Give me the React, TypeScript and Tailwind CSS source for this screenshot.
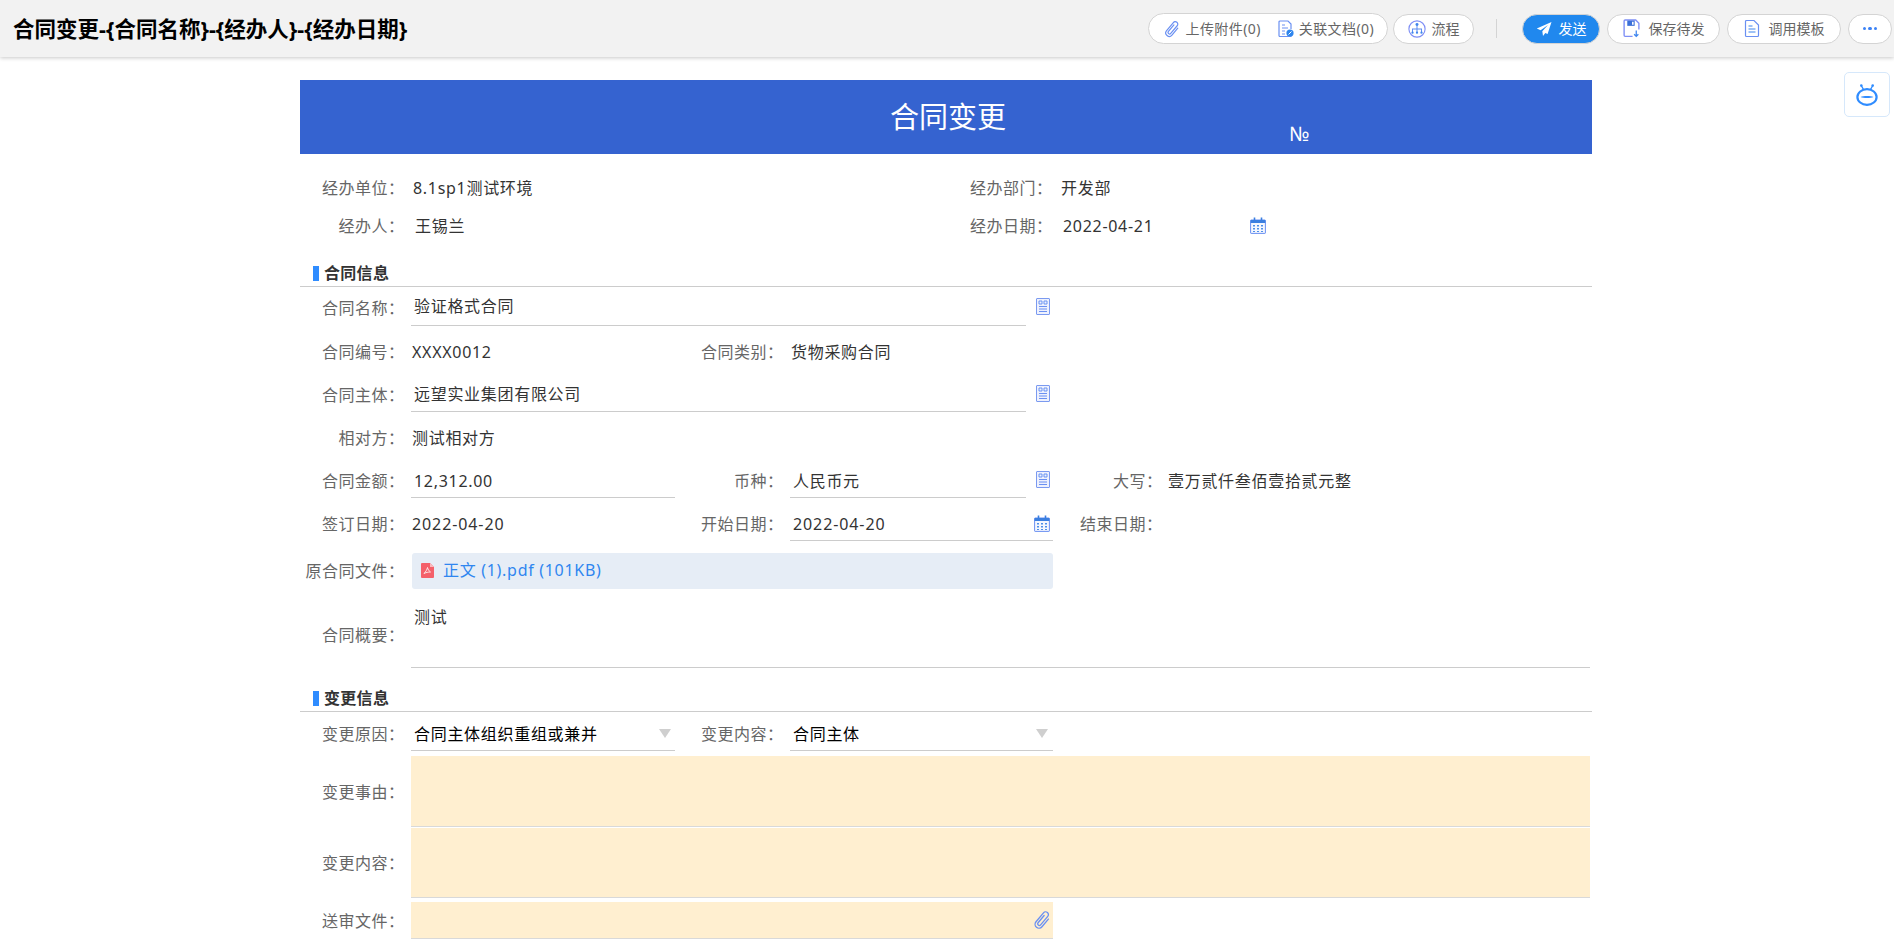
import React from "react";

const Clip = ({ className = "" }: { className?: string }) => (
  <svg viewBox="0 0 18 18" className={className} fill="none" stroke="#6a90f2" strokeWidth="1.200" strokeLinecap="round">
    <path d="M8 5v8.500a1.500 1.500 0 0 0 3 0V3.500a2.500 2.500 0 0 0-5 0V14a3.500 3.500 0 0 0 7 0V5" transform="rotate(40 9.500 9)" />
  </svg>
);

const LinkDoc = () => (
  <svg viewBox="0 0 16 18" className="w-[16px] h-[18px] shrink-0" fill="none">
    <path d="M2 1h8l3 3v5M13 14v2.500H2a1 1 0 0 1-1-1V2a1 1 0 0 1 1-1" stroke="#6a90f2" strokeWidth="1.200" />
    <path d="M4 5h3M4 8h6M4 11h3M4 14h3" stroke="#6a90f2" strokeWidth="1.100" />
    <circle cx="12" cy="13" r="3.600" fill="#2f86ee" />
    <path d="m10.500 14.500 3-3" stroke="#fff" strokeWidth="1" />
  </svg>
);

const Flow = () => (
  <svg viewBox="0 0 16 16" className="w-[18px] h-[18px] shrink-0" fill="none">
    <circle cx="8" cy="8" r="7.200" stroke="#7f8ff5" strokeWidth="1" />
    <path d="M8 4v4.500M4 11V8h8v3M8 8v3" stroke="#5f8df2" strokeWidth=".9" />
    <circle cx="8" cy="4" r="1.300" fill="#3f86ee" />
    <circle cx="4" cy="11.300" r="1" fill="#3f86ee" />
    <circle cx="8" cy="11.300" r="1" fill="#3f86ee" />
    <circle cx="12" cy="11.300" r="1" fill="#3f86ee" />
  </svg>
);

const Send = () => (
  <svg viewBox="0 0 16 16" className="w-[16px] h-[16px] shrink-0">
    <path d="M15.500 1 .8 7.600l3.800 1.700L12 4 6.300 10.300l.7 4.700 2.300-3.100 2.300 1z" fill="#fff" />
  </svg>
);

const Save = () => (
  <svg viewBox="0 0 16 18" className="w-[17px] h-[19px] shrink-0" fill="none">
    <path d="M9 16.500H2a1 1 0 0 1-1-1V2a1 1 0 0 1 1-1h10l3 3v6" stroke="#7f8ff5" strokeWidth="1.300" />
    <path d="M4 1.500h7v5H4z" fill="#3a6fd8" />
    <path d="M8.500 2.500h1.500v3H8.500z" fill="#fff" />
    <path d="M12.500 11v5.500M10.500 14.500l2 2 2-2" stroke="#3f86ee" strokeWidth="1.200" />
  </svg>
);

const Tpl = () => (
  <svg viewBox="0 0 16 18" className="w-[16px] h-[19px] shrink-0" fill="none">
    <path d="M10 1H2.500a1 1 0 0 0-1 1v14a1 1 0 0 0 1 1h11a1 1 0 0 0 1-1V5.500z" stroke="#6a90f2" strokeWidth="1.200" />
    <path d="M4.500 6.500h4M4.500 9.500h7M4.500 12.500h7" stroke="#3f86ee" strokeWidth="1.100" />
  </svg>
);

const Robot = () => (
  <svg viewBox="0 0 24 22" className="w-[24px] h-[22px]" fill="none">
    <ellipse cx="12" cy="13" rx="9.600" ry="7.800" stroke="#2f8cff" strokeWidth="2.200" />
    <path d="M5.500 13c3-1.300 10-1.300 13 0-3 1.300-10 1.300-13 0z" fill="#2f8cff" />
    <path d="m8.500 5.500-2-3.500M15.500 5.500l2-3.500" stroke="#2f8cff" strokeWidth="1.400" />
    <circle cx="6.300" cy="1.600" r="1.300" fill="#2f8cff" />
    <circle cx="17.700" cy="1.600" r="1.300" fill="#2f8cff" />
  </svg>
);

const Lookup = () => (
  <svg viewBox="0 0 14 17" className="w-[14px] h-[17px] shrink-0" fill="none">
    <rect x=".5" y=".5" width="13" height="16" rx=".5" fill="#eef1fd" stroke="#7b9af0" />
    <path d="M3 3h3v3H3zM8 3h3v3H8z" stroke="#5f8df2" strokeWidth=".9" />
    <path d="M3 8.500h8M3 11h8M3 13.500h8" stroke="#6a90f2" strokeWidth="1" />
  </svg>
);

const Calendar = () => (
  <svg viewBox="0 0 16 17" className="w-[16px] h-[17px] shrink-0" fill="none">
    <rect x=".6" y="3" width="14.800" height="13.400" rx=".5" fill="#f4f7fe" stroke="#6a90f2" />
    <rect x=".6" y="3" width="14.800" height="3" fill="#3b7fe0" />
    <path d="M4.500 .6v3.800M11.500 .6v3.800" stroke="#3b7fe0" strokeWidth="1.600" />
    <path d="M3 8h2v1.500H3zM7 8h2v1.500H7zM11 8h2v1.500h-2zM3 11h2v1.500H3zM7 11h2v1.500H7zM11 11h2v1.500h-2zM3 14h2v1H3zM7 14h2v1H7zM11 14h2v1h-2z" fill="#4f8fe8" />
  </svg>
);

const Pdf = () => (
  <svg viewBox="0 0 13 15" className="w-[13px] h-[15px] shrink-0">
    <path d="M1 0h8l4 4v10a1 1 0 0 1-1 1H1a1 1 0 0 1-1-1V1a1 1 0 0 1 1-1z" fill="#f4606a" />
    <path d="M9 0v4h4z" fill="#fbb9bd" />
    <path d="M6.500 4.500c-.5 2-1.500 4-3.500 6 2-1 4-1.500 6.500-1.500-1.500-1-2.500-2.500-3-4.500z" fill="none" stroke="#fff" strokeWidth=".8" />
  </svg>
);

const Tri = () => (
  <svg viewBox="0 0 12 9" className="w-[12px] h-[9px] shrink-0">
    <path d="M0 0h12L6 9z" fill="#cfcfcf" />
  </svg>
);

const Pill = ({ children, className = "" }: { children: React.ReactNode; className?: string }) => (
  <div className={`h-[30px] rounded-full border border-[#d4d4d4] bg-white flex items-center text-[14px] text-[#666] whitespace-nowrap ${className}`}>
    {children}
  </div>
);

const Label = ({ children, className = "pr-[6.500px]" }: { children: React.ReactNode; className?: string }) => (
  <div className={`text-right text-[16px] tracking-[0.5px] text-[#666] whitespace-nowrap ${className}`}>{children}：</div>
);

const Section = ({ title, className = "" }: { title: string; className?: string }) => (
  <div className={`h-[41px] border-b border-[#ccc] flex items-end pb-[5px] pl-[13px] ${className}`}>
    <div className="w-[6px] h-[15px] bg-[#2f8cff] mr-[5px]" />
    <div className="text-[16px] leading-[16px] tracking-[0.3px] font-bold text-[#333]">{title}</div>
  </div>
);

const Val = ({ children, className = "" }: { children: React.ReactNode; className?: string }) => (
  <div className={`text-[16px] text-[#333] tracking-[0.7px] whitespace-nowrap ${className}`}>{children}</div>
);

const cols = "grid grid-cols-[111px_264px_115px_263px_113px_1fr] items-center";

export default function App() {
  return (
    <div className="relative h-screen overflow-hidden bg-white font-['Noto_Sans','Noto_Sans_CJK_SC',sans-serif]">
      <header className="relative h-[57px] bg-[#f2f2f2] shadow-[0_1px_4px_rgba(0,0,0,0.22)] flex items-center pl-[13px] pr-[2px]">
        <div className="text-[21.500px] leading-[30px] font-bold text-black whitespace-nowrap">合同变更-{"{"}合同名称{"}"}-{"{"}经办人{"}"}-{"{"}经办日期{"}"}</div>
        <div className="ml-auto flex items-center">
          <Pill className="h-[31px] pl-[14px] pr-[13px] tracking-[0.4px]">
            <Clip className="w-[18px] h-[18px] shrink-0 mr-[5px]" />
            <span>上传附件(0)</span>
            <span className="ml-[17px] mr-[5px] flex"><LinkDoc /></span>
            <span>关联文档(0)</span>
          </Pill>
          <Pill className="ml-[5px] w-[81px] justify-center gap-[6px]">
            <Flow />
            <span>流程</span>
          </Pill>
          <div className="w-px h-[19px] bg-[#d4d4d4] ml-[22px] mr-[25px]" />
          <div className="h-[30px] w-[78px] rounded-full bg-[#2088ee] border border-[#d4d4d4] flex items-center justify-center gap-[7px] text-[14px] text-white">
            <Send />
            <span>发送</span>
          </div>
          <Pill className="ml-[7px] w-[113px] justify-center gap-[9px]">
            <Save />
            <span>保存待发</span>
          </Pill>
          <Pill className="ml-[7px] w-[114px] justify-center gap-[9px]">
            <Tpl />
            <span>调用模板</span>
          </Pill>
          <Pill className="ml-[7px] w-[44px] justify-center gap-[2px]">
            <span className="w-[3.500px] h-[3.500px] rounded-full bg-[#3b82f6]" />
            <span className="w-[3.500px] h-[3.500px] rounded-full bg-[#3b82f6]" />
            <span className="w-[3.500px] h-[3.500px] rounded-full bg-[#3b82f6]" />
          </Pill>
        </div>
      </header>

      <div className="absolute top-[72px] left-[1844px] w-[46px] h-[45px] rounded-[5px] border border-[#d6e8fb] bg-white flex items-center justify-center">
        <Robot />
      </div>

      <main className="ml-[300px] w-[1292px] pt-[23px]">
        <div className="h-[74px] bg-[#3563d0] flex text-white">
          <div className="pl-[590px] self-center text-[29px] leading-[40px]">合同变更</div>
          <div className="ml-[283px] self-end mb-[9px] text-[20px] leading-[22px]">№</div>
        </div>

        <div className="pt-[14px]">
          <div className="grid grid-cols-[111px_526px_122px_1fr] items-center h-[40px]">
            <Label>经办单位</Label>
            <Val className="pl-[2px]">8.1sp1测试环境</Val>
            <Label>经办部门</Label>
            <Val className="pl-[2px]">开发部</Val>
          </div>
          <div className="grid grid-cols-[111px_526px_122px_1fr] items-center h-[36px] mb-[2px]">
            <Label>经办人</Label>
            <Val className="pl-[4px]">王锡兰</Val>
            <Label>经办日期</Label>
            <div className="w-[207px] flex items-center justify-between pl-[4px] pb-[1px]">
              <Val>2022-04-21</Val>
              <Calendar />
            </div>
          </div>
        </div>

        <Section title="合同信息" />

        <div className={`${cols} h-[39px]`}>
          <Label className="pr-[6.500px] pt-[3px]">合同名称</Label>
          <div className="col-span-3 flex items-center h-full">
            <div className="flex-1 h-full border-b border-[#ccc] pl-[3px] flex items-center"><Val>验证格式合同</Val></div>
            <div className="w-[27px] pl-[10px] pb-[1px]"><Lookup /></div>
          </div>
        </div>

        <div className={`${cols} h-[52px]`}>
          <Label>合同编号</Label>
          <Val className="pl-[1px]">XXXX0012</Val>
          <Label>合同类别</Label>
          <Val className="pl-[1px]">货物采购合同</Val>
        </div>

        <div className={`${cols} h-[34px]`}>
          <Label>合同主体</Label>
          <div className="col-span-3 flex items-center h-full">
            <div className="flex-1 h-full border-b border-[#ccc] pl-[3px] pb-[2px] flex items-center"><Val>远望实业集团有限公司</Val></div>
            <div className="w-[27px] pl-[10px] pb-[3px]"><Lookup /></div>
          </div>
        </div>

        <div className={`${cols} h-[52px]`}>
          <Label>相对方</Label>
          <Val className="pl-[1px]">测试相对方</Val>
        </div>

        <div className={`${cols} h-[34px]`}>
          <Label>合同金额</Label>
          <div className="h-full border-b border-[#ccc] pl-[3px] flex items-center"><Val>12,312.00</Val></div>
          <Label>币种</Label>
          <div className="flex items-center h-full">
            <div className="flex-1 h-full border-b border-[#ccc] pl-[3px] flex items-center"><Val>人民币元</Val></div>
            <div className="w-[27px] pl-[10px] pb-[3px]"><Lookup /></div>
          </div>
          <Label className="pr-[3.500px]">大写</Label>
          <Val className="pl-[2px]">壹万贰仟叁佰壹拾贰元整</Val>
        </div>

        <div className={`${cols} h-[43px] pt-[9px]`}>
          <Label>签订日期</Label>
          <Val className="pl-[1px] tracking-[0.9px]">2022-04-20</Val>
          <Label>开始日期</Label>
          <div className="h-full border-b border-[#ccc] pl-[3px] pr-[3px] flex items-center justify-between">
            <Val className="tracking-[0.9px]">2022-04-20</Val>
            <Calendar />
          </div>
          <Label className="pr-[3.500px]">结束日期</Label>
        </div>

        <div className={`${cols} h-[36px] mt-[12px]`}>
          <Label>原合同文件</Label>
          <div className="col-span-3 h-full ml-[1px] bg-[#e6edf6] rounded-[3px] flex items-center pl-[9px] gap-[9px] pb-[2px]">
            <Pdf />
            <span className="text-[16px] tracking-[0.7px] text-[#2f86f0]">正文 (1).pdf (101KB)</span>
          </div>
        </div>

        <div className={`${cols} h-[66px] mt-[13px]`}>
          <Label>合同概要</Label>
          <div className="col-span-5 h-full border-b border-[#ccc] mr-[2px] pl-[3px] pt-[3px]"><Val>测试</Val></div>
        </div>

        <Section title="变更信息" className="mt-[3px]" />

        <div className={`${cols} h-[39px] pt-[5px]`}>
          <Label>变更原因</Label>
          <div className="h-full border-b border-[#ccc] pl-[3px] pr-[4px] flex items-center justify-between">
            <span className="text-[16px] text-black tracking-[0.7px]">合同主体组织重组或兼并</span>
            <Tri />
          </div>
          <Label>变更内容</Label>
          <div className="h-full border-b border-[#ccc] pl-[3px] pr-[5px] flex items-center justify-between">
            <span className="text-[16px] text-black tracking-[0.7px]">合同主体</span>
            <Tri />
          </div>
        </div>

        <div className={`${cols} h-[71px] mt-[5px]`}>
          <Label>变更事由</Label>
          <div className="col-span-5 h-full mr-[2px] bg-[#ffefd0] border-b border-[#d9d9d9]" />
        </div>

        <div className={`${cols} h-[70px] mt-[1px]`}>
          <Label>变更内容</Label>
          <div className="col-span-5 h-full mr-[2px] bg-[#ffefd0] border-b border-[#d9d9d9]" />
        </div>

        <div className={`${cols} h-[37px] mt-[4px]`}>
          <Label>送审文件</Label>
          <div className="col-span-3 h-full bg-[#ffefd0] border-b border-[#d9d9d9] flex items-center justify-end pr-[1px]">
            <Clip className="w-[20px] h-[20px]" />
          </div>
        </div>
      </main>
    </div>
  );
}
